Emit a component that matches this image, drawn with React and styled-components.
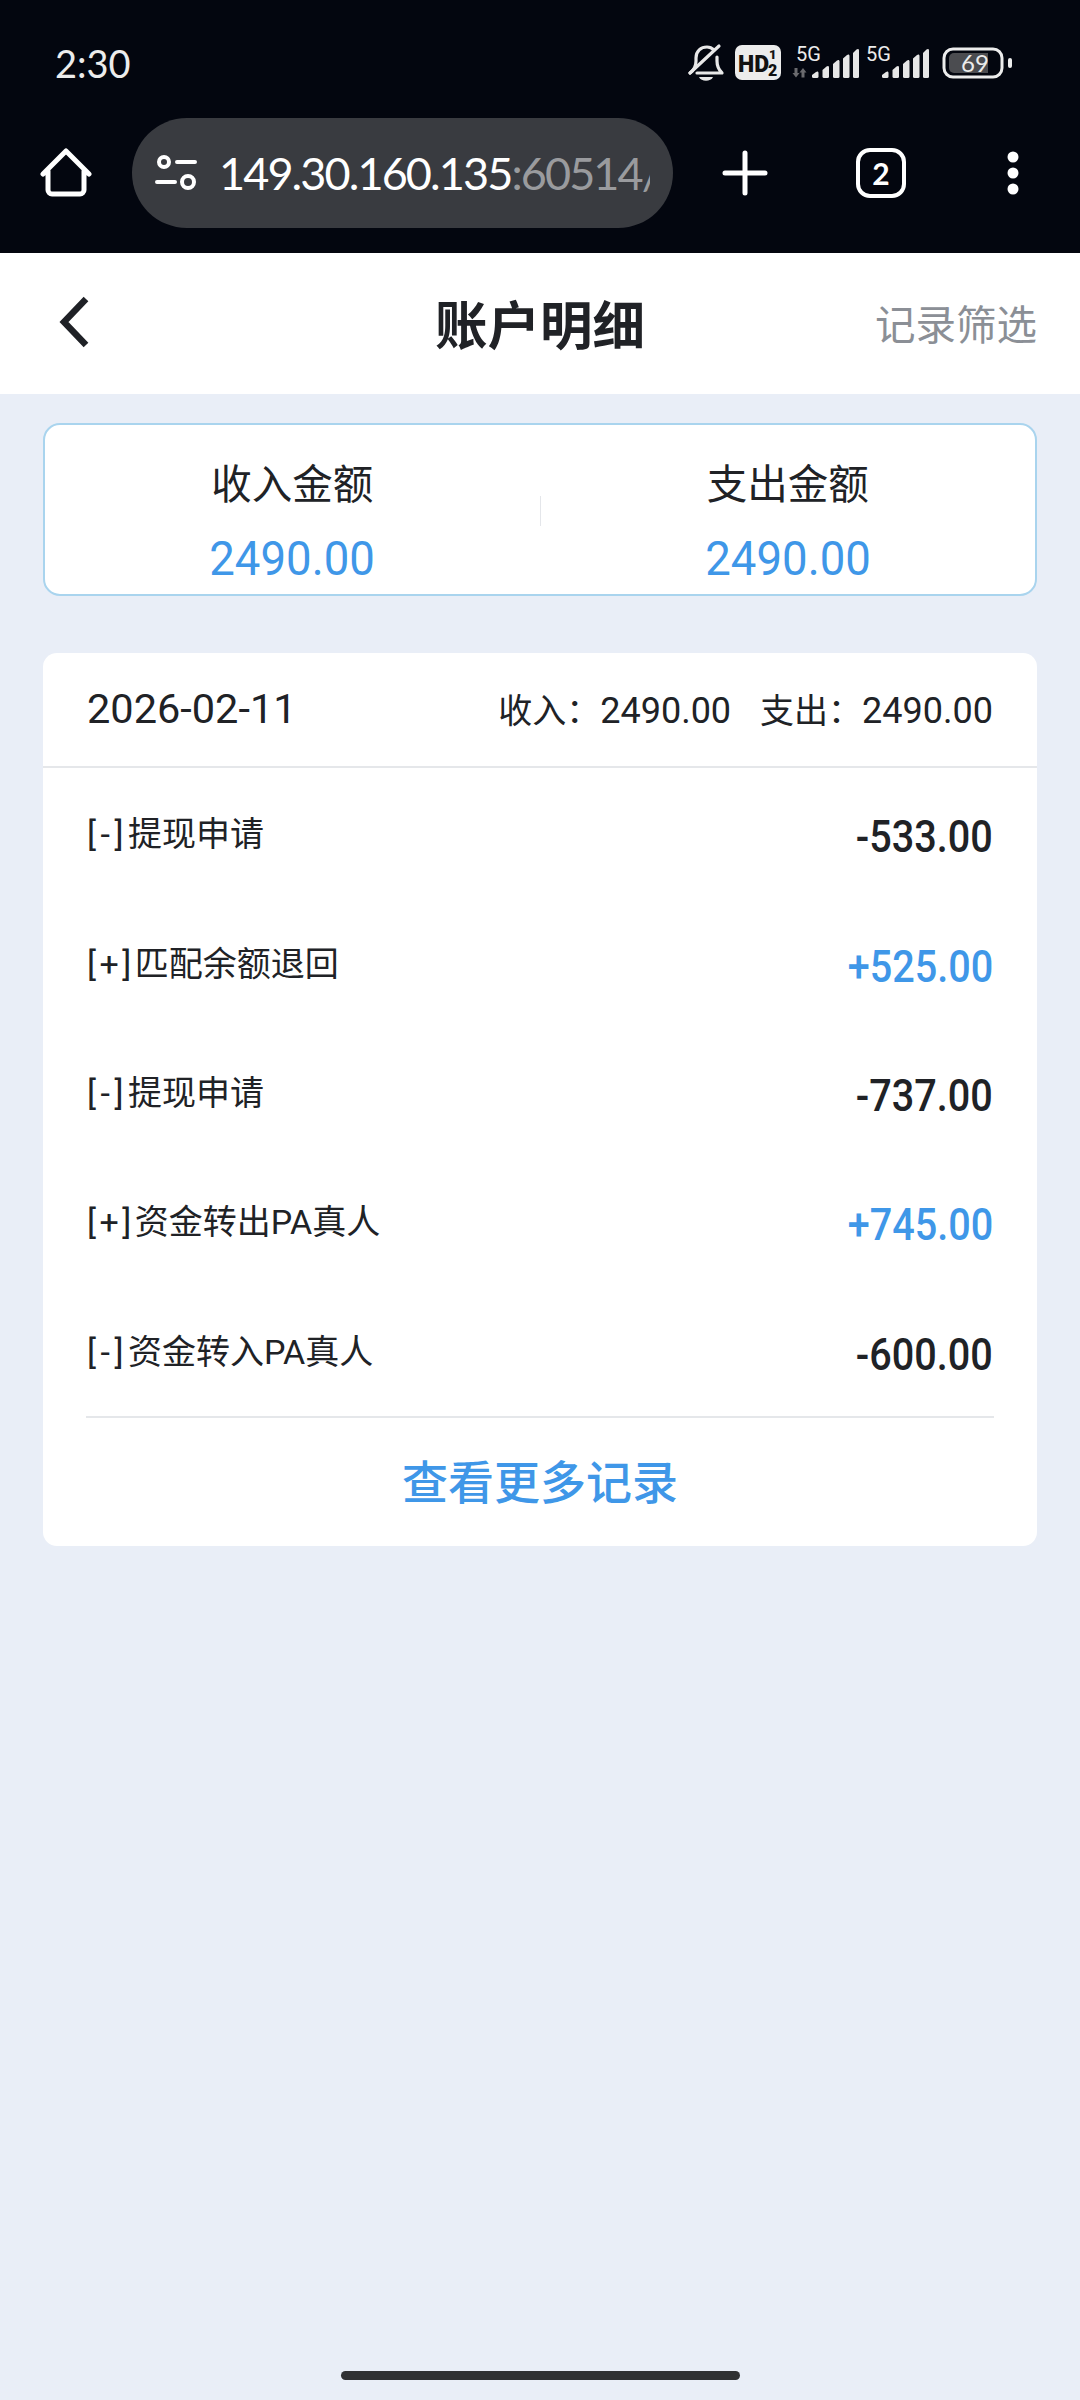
import React from "react";
import styled, { createGlobalStyle } from "styled-components";

const Global = createGlobalStyle`
  html, body { margin: 0; padding: 0; background: #e9eef7; }
  * { box-sizing: border-box; }
  #root { width: 1080px; height: 2400px; }
`;

const FONT = `Roboto, "Noto Sans CJK SC", sans-serif`;

const Page = styled.div`
  width: 1080px; height: 2400px; display: flex; flex-direction: column;
  background: #e9eef7; font-family: ${FONT}; color: #1f2126;
`;
const Chrome = styled.div`
  height: 253px; background: #03060f; color: #fff; display: flex; flex-direction: column;
`;
const StatusBar = styled.div`
  height: 118px; padding: 8px 65px 0 55px; display: flex; align-items: center; justify-content: space-between;
`;
const Clock = styled.span`
  font-family: Lato, sans-serif; font-size: 38px; color: #ececec;
`;
const StatusIcons = styled.div`display: flex; align-items: center; line-height: 0;`;
const Toolbar = styled.div`
  height: 110px; display: flex; align-items: center;
`;
const IconSlot = styled.div`
  width: ${p => p.$w}px; display: flex; justify-content: center; align-items: center; flex: none;
`;
const UrlPill = styled.div`
  width: 541px; height: 110px; border-radius: 55px; background: #393b40; flex: none;
  display: flex; align-items: center; padding-left: 23px; overflow: hidden;
`;
const UrlText = styled.div`
  font-family: Lato, sans-serif; font-size: 45px; letter-spacing: -1.9px; margin-left: 22px; width: 431px; overflow: hidden; white-space: nowrap;
  color: #fff;
  span { color: #9a9b9e; }
`;
const TabBox = styled.div`
  width: 50px; height: 50px; border: 4.5px solid #fff; border-radius: 14px; display: flex; align-items: center; justify-content: center;
  font-family: Lato, sans-serif; font-size: 30px; font-weight: 700; color: #fff;
`;
const NavBar = styled.div`
  height: 141px; background: #fff; display: flex; align-items: center; justify-content: center; position: relative;
`;
const Back = styled.div`position: absolute; left: 56px; top: 39px; line-height: 0;`;
const Title = styled.div`font-size: 52.5px; font-weight: 700; color: #202226; margin-top: -4px;`;
const Filter = styled.div`
  position: absolute; right: 43px; top: 49px; font-size: 40.5px; color: #8b8f96; line-height: 48px;
`;
const Content = styled.div`padding: 29px 43px 0; display: flex; flex-direction: column; gap: 57px;`;
const Summary = styled.div`
  height: 173px; background: #fff; border: 2px solid #a9d4ee; border-radius: 17px; display: flex; align-items: center;
`;
const SummaryCol = styled.div`
  flex: 1; display: flex; flex-direction: column; align-items: center; padding-top: 26px;
`;
const SummaryLabel = styled.div`font-size: 40.5px; line-height: 56px; color: #202226;`;
const SummaryValue = styled.div`
  font-size: 49px; line-height: 60px; margin-top: 16px; color: #3f97e8; transform: scaleX(.93);
`;
const SummaryDivider = styled.div`width: 1px; height: 30px; background: #e4e6ea; margin-top: 2px;`;
const Card = styled.div`background: #fff; border-radius: 14px; overflow: hidden;`;
const CardHead = styled.div`
  height: 115px; padding: 0 44px; display: flex; align-items: center; justify-content: space-between;
  border-bottom: 2px solid #e5e7ea;
`;
const DateText = styled.div`font-size: 41.5px; color: #202226; margin-top: -2px;`;
const Totals = styled.div`font-size: 34px; color: #202226; display: flex; gap: 29px; margin-top: -2px;`;
const TotalNum = styled.span`font-size: 36px;`;
const Rows = styled.div`padding: 0 44px; padding-top: 3px; margin-bottom: -2px;`;
const Row = styled.div`
  height: 129.4px; display: flex; align-items: center; justify-content: space-between;
`;
const RowLabel = styled.div`font-size: 34px; color: #202226; margin-top: -8px;`;
const Sign = styled.span`letter-spacing: ${p => p.$minus ? 4.5 : 3.5}px;`;
const RowAmount = styled.div`
  font-size: 45px; font-weight: 500; margin-top: 2px; color: ${p => p.$in ? "#3f97e8" : "#202226"};
  transform: scaleX(.88); transform-origin: right center;
`;
const More = styled.div`
  margin: 0 43px; border-top: 2px solid #e5e7ea; height: 130px; display: flex; align-items: center; justify-content: center;
  font-size: 46px; font-weight: 500; color: #3f97e8; padding-bottom: 5px;
  position: relative;
`;
const Spacer = styled.div`flex: 1;`;
const HomeBar = styled.div`
  width: 399px; height: 9px; border-radius: 5px; background: #303133; margin: 0 auto 20px;
`;

const rows = [
  ["[-]", "提现申请", "-533.00"],
  ["[+]", "匹配余额退回", "+525.00", true],
  ["[-]", "提现申请", "-737.00"],
  ["[+]", "资金转出PA真人", "+745.00", true],
  ["[-]", "资金转入PA真人", "-600.00"],
];

const Signal = ({ x }) => (
  <g fill="#e6e6e6" transform={`translate(${x} 0)`}>
    <path d="M0 35l4-3c1.5-1 2.5-.5 2.5 1v3.500a1.500 1.500 0 0 1-1.500 1.500H1.500A1.500 1.500 0 0 1 0 36.500z" />
    <path d="M10.500 30l4-3.500c1.500-1 2.500-.5 2.500 1v9a1.500 1.500 0 0 1-1.500 1.500h-3.500a1.500 1.500 0 0 1-1.500-1.500z" />
    <path d="M21 24l4-3.500c1.500-1 2.500-.5 2.500 1v15a1.500 1.500 0 0 1-1.500 1.500h-3.500a1.500 1.500 0 0 1-1.500-1.500z" />
    <path d="M31 18.500l4-3.500c1.500-1 2.500-.5 2.500 1v20.500a1.500 1.500 0 0 1-1.500 1.500h-3.500a1.500 1.500 0 0 1-1.500-1.500z" />
    <path d="M41 13l3.500-3.500c1.500-1 2.500-.5 2.500 1v26a1.500 1.500 0 0 1-1.500 1.500h-3a1.500 1.500 0 0 1-1.500-1.500z" />
  </g>
);

const StatusGlyphs = () => (
  <svg width="330" height="46" viewBox="0 0 330 46" fill="none">
    <g stroke="#e8e8e8" strokeWidth="3.2" strokeLinecap="round" strokeLinejoin="round">
      <path d="M5 33c4-3 6-6 6-12v-3C11 11 16 7 22 7c3 0 5 1 7 3M32 17v4c0 6 2 9 5 12H12" />
      <path d="M5 33 34 6" />
    </g>
    <path d="M14 37h14c-2 5-12 5-14 0z" fill="#e8e8e8" />
    <rect x="50" y="5" width="46" height="35" rx="7" fill="#ececec" />
    <text x="53" y="32" fontFamily="Roboto" fontWeight="900" fontSize="23" fill="#111">HD</text>
    <text x="84" y="19" fontFamily="Roboto" fontWeight="900" fontSize="13" fill="#111">1</text>
    <text x="83" y="36" fontFamily="Roboto" fontWeight="900" fontSize="16" fill="#111">2</text>
    <text x="111" y="21" fontFamily="Roboto" fontSize="20" fill="#ececec">5G</text>
    <path d="M109.500 28h3v5h2l-3.500 4.500-3.500-4.500h2zM116.500 37.500h3v-5h2l-3.500-4.500-3.500 4.500h2z" fill="#6a6a6e" />
    <Signal x={127} />
    <text x="181" y="21" fontFamily="Roboto" fontSize="20" fill="#ececec">5G</text>
    <Signal x={197} />
    <rect x="259" y="9" width="58" height="28" rx="9" stroke="#ececec" strokeWidth="3" />
    <path d="M269 13h34v20h-34a5 5 0 0 1-5-5V18a5 5 0 0 1 5-5z" fill="#4b4c50" />
    <rect x="323" y="18" width="4" height="10" rx="2" fill="#ececec" />
    <text x="290" y="32" textAnchor="middle" fontFamily="Lato" fontSize="24" fill="#ececec">69</text>
  </svg>
);

export default function App() {
  return (
    <Page>
      <Global />
      <Chrome>
        <StatusBar>
          <Clock>2:30</Clock>
          <StatusIcons><StatusGlyphs /></StatusIcons>
        </StatusBar>
        <Toolbar>
          <IconSlot $w={132}>
            <svg width="52" height="52" viewBox="0 0 52 52" fill="none" stroke="#fff" strokeWidth="5" strokeLinejoin="round" strokeLinecap="round">
              <path d="M3 27 26 4l23 23M8 24v19a4 4 0 0 0 4 4h28a4 4 0 0 0 4-4V24" />
            </svg>
          </IconSlot>
          <UrlPill>
            <svg width="42" height="36" viewBox="0 0 42 36" fill="none" stroke="#fff" strokeWidth="4" strokeLinecap="round">
              <circle cx="9" cy="7" r="5" />
              <path d="M22 7h18M2 27h18" />
              <circle cx="33" cy="27" r="6" />
            </svg>
            <UrlText>149.30.160.135<span>:60514/</span></UrlText>
          </UrlPill>
          <IconSlot $w={144}>
            <svg width="46" height="46" viewBox="0 0 46 46" stroke="#fff" strokeWidth="5" strokeLinecap="round">
              <path d="M23 3v40M3 23h40" />
            </svg>
          </IconSlot>
          <IconSlot $w={128}><TabBox>2</TabBox></IconSlot>
          <IconSlot $w={135}>
            <svg width="14" height="46" viewBox="0 0 14 46" fill="#fff">
              <circle cx="7" cy="7" r="5.5" /><circle cx="7" cy="23" r="5.5" /><circle cx="7" cy="39" r="5.5" />
            </svg>
          </IconSlot>
        </Toolbar>
        <Spacer />
      </Chrome>
      <NavBar>
        <Back>
          <svg width="36" height="60" viewBox="0 0 36 60" fill="none" stroke="#1f2126" strokeWidth="6.5">
            <path d="M30 7 8 30l22 23" />
          </svg>
        </Back>
        <Title>账户明细</Title>
        <Filter>记录筛选</Filter>
      </NavBar>
      <Content>
        <Summary>
          <SummaryCol>
            <SummaryLabel>收入金额</SummaryLabel>
            <SummaryValue>2490.00</SummaryValue>
          </SummaryCol>
          <SummaryDivider />
          <SummaryCol>
            <SummaryLabel>支出金额</SummaryLabel>
            <SummaryValue>2490.00</SummaryValue>
          </SummaryCol>
        </Summary>
        <Card>
          <CardHead>
            <DateText>2026-02-11</DateText>
            <Totals>
              <span>收入：<TotalNum>2490.00</TotalNum></span>
              <span>支出：<TotalNum>2490.00</TotalNum></span>
            </Totals>
          </CardHead>
          <Rows>
            {rows.map(([s, l, a, i], n) => (
              <Row key={n}>
                <RowLabel><Sign $minus={s === "[-]"}>{s}</Sign>{l}</RowLabel>
                <RowAmount $in={i}>{a}</RowAmount>
              </Row>
            ))}
          </Rows>
          <More>查看更多记录</More>
        </Card>
      </Content>
      <Spacer />
      <HomeBar />
    </Page>
  );
}
